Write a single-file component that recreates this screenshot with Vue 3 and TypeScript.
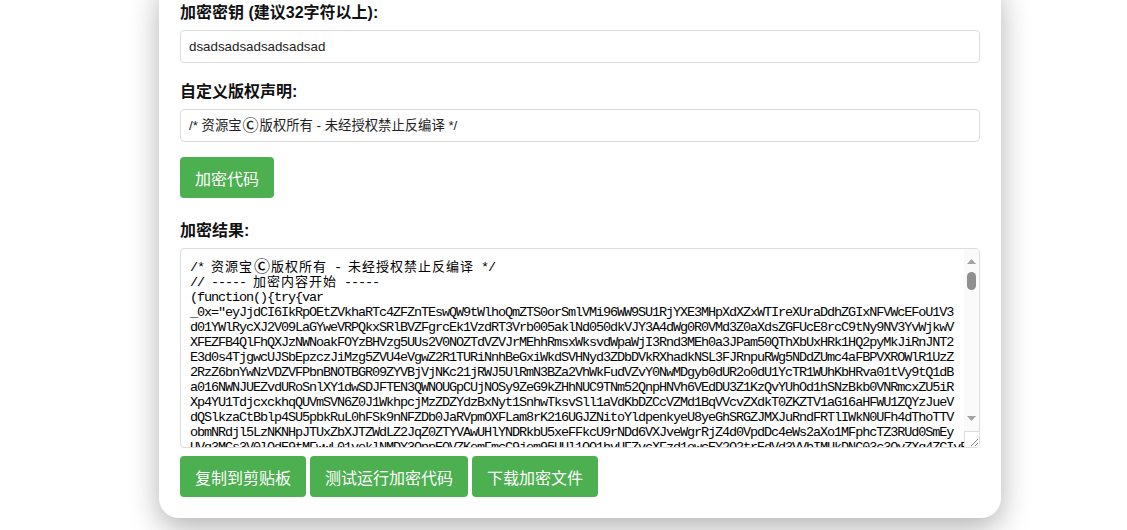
<script setup lang="ts">
const keyValue = 'dsadsadsadsadsadsad'

const lines: string[] = [
  '_0x="eyJjdCI6IkRpOEtZVkhaRTc4ZFZnTEswQW9tWlhoQmZTS0orSmlVMi96WW9SU1RjYXE3MHpXdXZxWTIreXUraDdhZGIxNFVWcEFoU1V3',
  'd01YWlRycXJ2V09LaGYweVRPQkxSRlBVZFgrcEk1VzdRT3Vrb005aklNd050dkVJY3A4dWg0R0VMd3Z0aXdsZGFUcE8rcC9tNy9NV3YvWjkwV',
  'XFEZFB4QlFhQXJzNWNoakFOYzBHVzg5UUs2V0NOZTdVZVJrMEhhRmsxWksvdWpaWjI3Rnd3MEh0a3JPam50QThXbUxHRk1HQ2pyMkJiRnJNT2',
  'E3d0s4TjgwcUJSbEpzczJiMzg5ZVU4eVgwZ2R1TURiNnhBeGxiWkdSVHNyd3ZDbDVkRXhadkNSL3FJRnpuRWg5NDdZUmc4aFBPVXROWlR1UzZ',
  '2RzZ6bnYwNzVDZVFPbnBNOTBGR09ZYVBjVjNKc21jRWJ5UlRmN3BZa2VhWkFudVZvY0NwMDgyb0dUR2o0dU1YcTR1WUhKbHRva01tVy9tQ1dB',
  'a016NWNJUEZvdURoSnlXY1dwSDJFTEN3QWNOUGpCUjNOSy9ZeG9kZHhNUC9TNm52QnpHNVh6VEdDU3Z1KzQvYUhOd1hSNzBkb0VNRmcxZU5iR',
  'Xp4YU1TdjcxckhqQUVmSVN6Z0J1WkhpcjMzZDZYdzBxNyt1SnhwTksvSll1aVdKbDZCcVZMd1BqVVcvZXdkT0ZKZTV1aG16aHFWU1ZQYzJueV',
  'dQSlkzaCtBblp4SU5pbkRuL0hFSk9nNFZDb0JaRVpmOXFLam8rK216UGJZNitoYldpenkyeU8yeGhSRGZJMXJuRndFRTlIWkN0UFh4dThoTTV',
  'obmNRdjl5LzNKNHpJTUxZbXJTZWdLZ2JqZ0ZTYVAwUHlYNDRkbU5xeFFkcU9rNDd6VXJveWgrRjZ4d0VpdDc4eWs2aXo1MFphcTZ3RUd0SmEy',
  'UVg3MCs3V0lQdE9tMFwwL01veklNMDY3OnpEOVZKemFmcC9jem95UUl1OO1hvUFZvcXFzd1owcEY2O2trEdVd3VVbIMUkDNC03c3OyZXg4ZCIvR'
]
</script>

<template>
  <main class="page">
    <section class="card">
      <div class="field">
        <label class="label" for="key">加密密钥 (建议32字符以上):</label>
        <input id="key" class="input" type="text" :value="keyValue" />
      </div>
      <div class="field">
        <div class="label">自定义版权声明:</div>
        <div class="input" role="textbox" contenteditable="plaintext-only">/* 资源宝<span class="mark">Ⓒ</span>版权所有 - 未经授权禁止反编译 */</div>
      </div>
      <button class="btn" type="button">加密代码</button>

      <div class="result">
        <div class="label">加密结果:</div>
        <div class="code-box">
          <div class="code" tabindex="0">
            <div>/* <span class="zh">资源宝</span><span class="mark">Ⓒ</span><span class="zh">版权所有</span> - <span class="zh">未经授权禁止反编译</span> */</div>
            <div>// ----- <span class="zh">加密内容开始</span> -----</div>
            <div>(function(){try{var</div>
            <div v-for="(line, i) in lines" :key="i">{{ line }}</div>
          </div>
          <div class="bar" aria-hidden="true">
            <svg class="arrow arrow-up" width="9" height="5" viewBox="0 0 9 5"><path d="M4.5 0 9 5H0z" fill="#a3a3a3" /></svg>
            <div class="thumb"></div>
            <div class="bar-gap"></div>
            <svg class="arrow arrow-down" width="9" height="5" viewBox="0 0 9 5"><path d="M0 0h9L4.5 5z" fill="#a3a3a3" /></svg>
            <div class="grip">
              <svg width="15" height="16" viewBox="0 0 15 16"><path d="M14 8 7 15M14 12l-3 3" stroke="#888" fill="none" /></svg>
            </div>
          </div>
        </div>
      </div>

      <div class="actions">
        <button class="btn" type="button">复制到剪贴板</button>
        <button class="btn" type="button">测试运行加密代码</button>
        <button class="btn" type="button">下载加密文件</button>
      </div>
    </section>
  </main>
</template>

<style>
html,
body {
  margin: 0;
  height: 530px;
  overflow: hidden;
  background: #fff;
}
</style>

<style scoped>
.page {
  padding-left: 159px;
  font-family: "Liberation Sans", "Noto Sans CJK SC", sans-serif;
  color: #111;
}

.card {
  box-sizing: border-box;
  width: 842px;
  margin-top: -21px;
  padding: 20px 21px 21px;
  background: #fff;
  border-radius: 20px;
  box-shadow: 0 10px 30px rgba(0, 0, 0, 0.3);
}

.field {
  margin-bottom: 15px;
}

.label {
  display: block;
  padding-top: 2px;
  margin-bottom: 6px;
  font-size: 16px;
  line-height: 23px;
  font-weight: 700;
}

.input {
  display: block;
  box-sizing: border-box;
  width: 100%;
  height: 33px;
  padding: 8px;
  border: 1px solid #ddd;
  border-radius: 4px;
  font: 13.33px/15px "Liberation Sans", "Noto Sans CJK SC", sans-serif;
  color: #222;
  outline: none;
  white-space: nowrap;
  overflow: hidden;
}

.mark {
  margin: 0 1px;
  font-family: "Noto Sans CJK SC", sans-serif;
  font-size: 16px;
  font-weight: 500;
  line-height: 0;
  letter-spacing: 0;
  vertical-align: -1px;
}

.btn {
  box-sizing: border-box;
  height: 41px;
  padding: 0 15px;
  border: 0;
  border-radius: 4px;
  background: #4caf50;
  color: #fff;
  font: 16px "Liberation Sans", "Noto Sans CJK SC", sans-serif;
}

.result {
  margin-top: 19px;
}

.code-box {
  position: relative;
  box-sizing: border-box;
  height: 200px;
  border: 1px solid #ddd;
  border-radius: 4px;
  overflow: hidden;
}

.code {
  box-sizing: border-box;
  height: 100%;
  padding: 11px 9px 0;
  overflow: hidden;
  white-space: pre;
  font: 13.5px/15px "Liberation Mono", "Noto Sans CJK SC", monospace;
  letter-spacing: -1.1px;
  color: #000;
  outline: none;
}

.zh {
  font-family: "Noto Sans CJK SC", sans-serif;
  font-size: 13px;
  line-height: 0;
  letter-spacing: 1px;
}

.bar {
  position: absolute;
  top: 0;
  right: 0;
  bottom: 0;
  display: flex;
  flex-direction: column;
  align-items: center;
  width: 15px;
  background: #fafafa;
}

.arrow {
  flex: none;
  display: block;
}

.arrow-up {
  margin-top: 10px;
}

.thumb {
  flex: none;
  width: 9px;
  height: 18px;
  margin-top: 8px;
  border-radius: 5px;
  background: #8f8f8f;
}

.bar-gap {
  flex: 1;
}

.arrow-down {
  margin-bottom: 10px;
}

.grip {
  box-sizing: border-box;
  flex: none;
  width: 15px;
  height: 16px;
  background: #fff;
  border-top: 1px solid #ddd;
  border-left: 1px solid #ddd;
  overflow: hidden;
}

.grip svg {
  display: block;
  margin: -1px 0 0 -1px;
}

.actions {
  display: flex;
  gap: 4px;
  margin-top: 8px;
}
</style>
